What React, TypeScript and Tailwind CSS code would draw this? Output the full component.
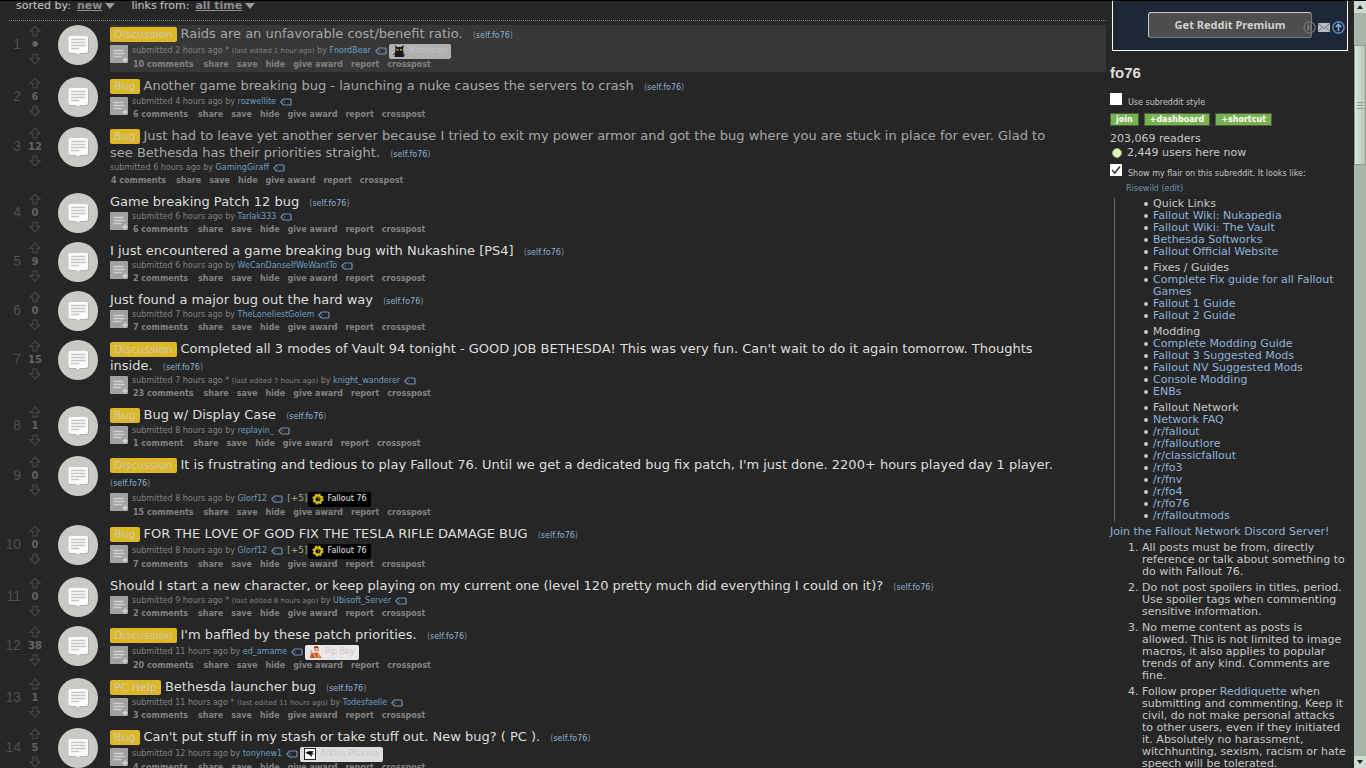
type Flair = { label: string; kind: 'mothman' | 'fallout' | 'pipboy' | 'arktos'; votes?: string };

type Post = {
  rank: number;
  score: string;
  tag?: string;
  title: string;
  age: string;
  edited?: string;
  author: string;
  comments: string;
  flair?: Flair;
  visited?: boolean;
  selected?: boolean;
  noExpando?: boolean;
};

const posts: Post[] = [
  { rank: 1, score: '•', tag: 'Discussion', title: 'Raids are an unfavorable cost/benefit ratio.', age: '2 hours', edited: '1 hour', author: 'FnordBear', comments: '10 comments', flair: { label: 'Mothman', kind: 'mothman' }, visited: true, selected: true },
  { rank: 2, score: '6', tag: 'Bug', title: 'Another game breaking bug - launching a nuke causes the servers to crash', age: '4 hours', author: 'rozwellite', comments: '6 comments', visited: true },
  { rank: 3, score: '12', tag: 'Bug', title: 'Just had to leave yet another server because I tried to exit my power armor and got the bug where you are stuck in place for ever. Glad to see Bethesda has their priorities straight.', age: '6 hours', author: 'GamingGiraff', comments: '4 comments', visited: true, noExpando: true },
  { rank: 4, score: '0', title: 'Game breaking Patch 12 bug', age: '6 hours', author: 'Tarlak333', comments: '6 comments' },
  { rank: 5, score: '9', title: 'I just encountered a game breaking bug with Nukashine [PS4]', age: '6 hours', author: 'WeCanDanseIfWeWantTo', comments: '2 comments' },
  { rank: 6, score: '0', title: 'Just found a major bug out the hard way', age: '7 hours', author: 'TheLoneliestGolem', comments: '7 comments' },
  { rank: 7, score: '15', tag: 'Discussion', title: "Completed all 3 modes of Vault 94 tonight - GOOD JOB BETHESDA! This was very fun. Can't wait to do it again tomorrow. Thoughts inside.", age: '7 hours', edited: '7 hours', author: 'knight_wanderer', comments: '23 comments' },
  { rank: 8, score: '1', tag: 'Bug', title: 'Bug w/ Display Case', age: '8 hours', author: 'replayin_', comments: '1 comment' },
  { rank: 9, score: '0', tag: 'Discussion', title: "It is frustrating and tedious to play Fallout 76. Until we get a dedicated bug fix patch, I'm just done. 2200+ hours played day 1 player.", age: '8 hours', author: 'Glorf12', comments: '15 comments', flair: { label: 'Fallout 76', kind: 'fallout', votes: '[+5]' } },
  { rank: 10, score: '0', tag: 'Bug', title: 'FOR THE LOVE OF GOD FIX THE TESLA RIFLE DAMAGE BUG', age: '8 hours', author: 'Glorf12', comments: '7 comments', flair: { label: 'Fallout 76', kind: 'fallout', votes: '[+5]' } },
  { rank: 11, score: '0', title: 'Should I start a new character, or keep playing on my current one (level 120 pretty much did everything I could on it)?', age: '9 hours', edited: '8 hours', author: 'Ubisoft_Server', comments: '2 comments' },
  { rank: 12, score: '38', tag: 'Discussion', title: "I'm baffled by these patch priorities.", age: '11 hours', author: 'ed_amame', comments: '20 comments', flair: { label: 'Pip Boy', kind: 'pipboy' } },
  { rank: 13, score: '1', tag: 'PC Help', title: 'Bethesda launcher bug', age: '11 hours', edited: '11 hours', author: 'Todesfaelle', comments: '3 comments' },
  { rank: 14, score: '5', tag: 'Bug', title: "Can't put stuff in my stash or take stuff out. New bug? ( PC ).", age: '12 hours', author: 'tonynew1', comments: '4 comments', flair: { label: 'Arktos Pharma', kind: 'arktos' } },
];

const actions = ['share', 'save', 'hide', 'give award', 'report', 'crosspost'];

const linkGroups = [
  { heading: 'Quick Links', links: ['Fallout Wiki: Nukapedia', 'Fallout Wiki: The Vault', 'Bethesda Softworks', 'Fallout Official Website'] },
  { heading: 'Fixes / Guides', links: ['Complete Fix guide for all Fallout Games', 'Fallout 1 Guide', 'Fallout 2 Guide'] },
  { heading: 'Modding', links: ['Complete Modding Guide', 'Fallout 3 Suggested Mods', 'Fallout NV Suggested Mods', 'Console Modding', 'ENBs'] },
  { heading: 'Fallout Network', links: ['Network FAQ', '/r/fallout', '/r/falloutlore', '/r/classicfallout', '/r/fo3', '/r/fnv', '/r/fo4', '/r/fo76', '/r/falloutmods'] },
];

const flairColors = {
  mothman: 'bg-[#b0b0b0] text-[#c4c4c4]',
  fallout: 'bg-black text-[#e6e6e6]',
  pipboy: 'bg-[#ebe7e6] text-[#c9c9c9]',
  arktos: 'bg-[#dedede] text-[#c6c6c6]',
};

function Arrow({ down = false }: { down?: boolean }) {
  return (
    <svg width="12" height="12" viewBox="0 0 12 12" className={down ? 'rotate-180' : ''} fill="none" stroke="#474747" strokeWidth="1.2">
      <path d="M6 1 L11 6.3 H8 V10.8 H4 V6.3 H1 Z" />
    </svg>
  );
}

function Thumbnail() {
  return (
    <svg width="40" height="40" viewBox="0 0 40 40">
      <circle cx="20" cy="20" r="20" fill="#c9cac4" />
      <path d="M12.500 12 h16.500 a2 2 0 0 1 2 2 v13 a2 2 0 0 1 -2 2 h-7 l-2 2 l-2 -2 h-5.500 a2 2 0 0 1 -2 -2 v-13 a2 2 0 0 1 2 -2" fill="#b2b3ad" />
      <path d="M12.500 11 h15.500 a2 2 0 0 1 2 2 v13 a2 2 0 0 1 -2 2 h-6 l-2 2 l-2 -2 h-5.500 a2 2 0 0 1 -2 -2 v-13 a2 2 0 0 1 2 -2" fill="#fcfcfc" />
      <path d="M13 14.500 h14.500 M13 17.500 h14.500 M13 20.500 h14.500 M13 23.500 h8" stroke="#c6c7c2" strokeWidth="1.300" />
    </svg>
  );
}

function Expando() {
  return (
    <svg width="18" height="18" viewBox="0 0 18 18">
      <rect width="18" height="18" rx="1" fill="#a2a2a2" />
      <path d="M3.500 5.500 h10 M3.500 8.500 h11 M3.500 11.500 h8" stroke="#d0d0d0" strokeWidth="1.400" />
      <path d="M15 12.500 v5 M12.500 15 h5" stroke="#d6d6d6" strokeWidth="1.600" />
    </svg>
  );
}

function TagIcon() {
  return (
    <svg width="12" height="8" viewBox="0 0 12 8" fill="none" stroke="#6f93b8" strokeWidth="1.200">
      <path d="M3.500 1 H10 Q11 1 11 2 V6 Q11 7 10 7 H3.500 L0.800 4 Z" />
      <path d="M4 4 h1" />
    </svg>
  );
}

function FlairIcon({ kind }: { kind: Flair['kind'] }) {
  if (kind === 'mothman') {
    return (
      <svg width="12" height="12" viewBox="0 0 12 12">
        <path d="M2 0 L4 2 H8 L11 0 L10 4 L11 12 H1.500 L2.500 4 Z" fill="#17191b" />
        <path d="M3.500 4 h2 v1.500 h-2 z M7 4 h2 v1.500 h-2 z" fill="#e8a512" />
        <path d="M0 10 L3 7 M10 8 L12 11" stroke="#3c3c3c" />
      </svg>
    );
  }
  if (kind === 'fallout') {
    return (
      <svg width="12" height="12" viewBox="0 0 12 12">
        <circle cx="6" cy="6" r="3.500" fill="none" stroke="#e8c80e" strokeWidth="2" />
        <circle cx="6" cy="6" r="4.800" fill="none" stroke="#e8c80e" strokeWidth="1.600" strokeDasharray="2 1.770" />
        <path d="M4.500 4.500 h3 L6 8" fill="none" stroke="#9a850b" />
      </svg>
    );
  }
  if (kind === 'pipboy') {
    return (
      <svg width="12" height="12" viewBox="0 0 12 12">
        <path d="M5 1 Q7 -1 9.500 1 V3 H5 Z" fill="#b5371f" />
        <rect x="5" y="2" width="5" height="5" rx="2" fill="#f2c6a0" />
        <path d="M1 5 L3 4 L4 8 L2 9 Z" fill="#e3a07a" />
        <path d="M2 8 L5 7 H9 L12 11 V12 H1 Z" fill="#c6502c" />
        <path d="M5 8 L7 12 M9 8 L10 12" stroke="#e8b62c" strokeWidth="1.300" />
        <path d="M6 4 h1 M8.500 4 h1" stroke="#5b2a1a" />
      </svg>
    );
  }
  return (
    <svg width="12" height="12" viewBox="0 0 12 12">
      <rect x="0.500" y="0.500" width="11" height="11" fill="#fff" stroke="#222" />
      <path d="M1.500 5 Q4 2 10 3.500 L8 5 L10.500 6.500 L7.500 6.500 L8 9 L5 6.500 Z" fill="#111" />
    </svg>
  );
}

function PostRow({ post }: { post: Post }) {
  const tall = post.tag && !post.noExpando && post.rank !== 7;
  return (
    <article className="mb-[5px] flex items-start">
      <span className="w-[21px] shrink-0 pt-[11px] text-right font-['Liberation_Sans',Arial,sans-serif] text-sm leading-4 text-[#505050]">{post.rank}</span>
      <div className="flex w-7 shrink-0 flex-col items-center">
        <button aria-label="upvote"><Arrow /></button>
        <span className={`leading-4 font-bold text-[#646464] ${post.score === '•' ? 'text-base' : 'text-[10px]'}`}>{post.score}</span>
        <button aria-label="downvote"><Arrow down /></button>
      </div>
      <a href="#" aria-label={post.title} className="-mb-1 ml-[9px] shrink-0"><Thumbnail /></a>
      <div className={`ml-3 min-w-0 flex-1 ${post.selected ? 'bg-[#373737]' : ''}`}>
        <p className={`pr-10 text-[13px] leading-[17px] ${tall ? 'pb-px' : ''}`}>
          {post.tag && (
            <span className="mr-1 inline-block h-[15px] rounded-xs bg-[#ddb726] px-1 align-bottom text-[11px] leading-[15px] text-[#cfcbbd]">{post.tag}</span>
          )}
          <a href="#" className={`mr-1.5 ${post.visited ? 'text-[#a6a6a6]' : 'text-[#dedede]'}`}>{post.title}</a>{' '}
          <span className="inline-block align-bottom text-[8px] leading-[12px] text-[#888888]">
            (<a href="#" className="text-[#8cb3d9]">self.fo76</a>)
          </span>
        </p>
        <div className="flex gap-1">
          {!post.noExpando && (
            <button aria-label="expand" className="mt-0.5 -mb-1 h-[18px] shrink-0"><Expando /></button>
          )}
          <div className="pt-px">
            <div className={`flex items-center text-[8px] whitespace-pre text-[#828282] ${post.flair ? 'h-3.5' : 'h-3'}`}>
              <span>submitted {post.age} ago </span>
              {post.edited && <span>* <span className="text-[7px]">(last edited {post.edited} ago)</span> </span>}
              <span>by </span>
              <a href="#" className="text-[#6a9fc0]">{post.author}</a>
              <button aria-label="tag user" className="ml-1"><TagIcon /></button>
              {post.flair?.votes && <span className="ml-1 text-[9px] text-[#9bb08a]">{post.flair.votes}</span>}
              {post.flair && (
                <span className={`flex h-[15px] items-center gap-1 rounded-xs px-1 ${flairColors[post.flair.kind]} ${post.flair.votes ? '' : 'ml-0.5'}`}>
                  <FlairIcon kind={post.flair.kind} />
                  {post.flair.label}
                </span>
              )}
            </div>
            <div className="flex gap-2 pl-px text-[8px] leading-[14px] font-bold text-[#828282]">
              <a href="#" className="pr-0.5">{post.comments}</a>
              {actions.map((a) => <button key={a}>{a}</button>)}
            </div>
          </div>
        </div>
      </div>
    </article>
  );
}

function SortMenu({ label, value }: { label: string; value: string }) {
  return (
    <div className="flex items-center">
      <span>{label}</span>
      <button aria-haspopup="menu" aria-label={`${label} ${value}`} className="ml-1.5 flex items-center gap-[3px] font-bold text-[#8c8c8c]">
        <span className="underline">{value}</span>
        <svg width="10" height="6" viewBox="0 0 10 6"><path d="M0 0 H10 L5 6 Z" fill="#999" /></svg>
      </button>
    </div>
  );
}

function PremiumBox() {
  return (
    <div className="relative mr-1.5 ml-0.5 h-[50px] border border-t-0 border-white bg-[#1c2836] px-[35px] pt-[11px]">
      <button className="h-[26px] w-full rounded-[3px] border border-[#777] border-t-[#c8c8c8] border-l-[#c8c8c8] bg-[#4d4d4d] font-['Noto_Sans',sans-serif] text-[11px] font-bold text-[#cfcfcf]">
        Get Reddit Premium
      </button>
      <div className="absolute top-5 right-0.5 flex items-center gap-0.5">
        <svg width="13" height="13" viewBox="0 0 14 14" fill="none" stroke="#777" strokeWidth="1.300">
          <circle cx="7" cy="7" r="6" />
          <path d="M5.500 4 v6 M8.500 4 v6" strokeWidth="2" />
        </svg>
        <svg width="12" height="9" viewBox="0 0 12 9">
          <rect width="12" height="9" fill="#b9bcc0" />
          <path d="M0 0.500 L6 5.500 L12 0.500 M0 8.500 L4 4.500 M12 8.500 L8 4.500" fill="none" stroke="#6d7278" />
        </svg>
        <svg width="13" height="13" viewBox="0 0 13 13" fill="none" stroke="#5583b8" strokeWidth="1.600">
          <circle cx="6.500" cy="6.500" r="5.600" />
          <path d="M6.500 10 V3.500 M3.800 6 L6.500 3.300 L9.200 6" stroke="#8bb2dc" />
        </svg>
      </div>
    </div>
  );
}

function FlairCheckbox({ id, label, checked = false }: { id: string; label: string; checked?: boolean }) {
  return (
    <div className="flex items-end gap-1.5 text-[8px] leading-[9px] text-[#c4c4c4]">
      <span className="relative h-3 w-3 shrink-0">
        <input id={id} type="checkbox" defaultChecked={checked} className="peer block h-3 w-3 appearance-none bg-white" />
        <svg width="12" height="12" viewBox="0 0 12 12" className="pointer-events-none absolute inset-0 hidden peer-checked:block">
          <path d="M2 6 L4.800 9 L10 2.500" fill="none" stroke="#333" strokeWidth="1.500" />
        </svg>
      </span>
      <label htmlFor={id} className="-mb-0.5">{label}</label>
    </div>
  );
}

function Sidebar() {
  return (
    <aside className="ml-1 w-[244px] shrink-0 text-[11px] leading-3 text-[#c8c8c8]">
      <PremiumBox />
      <h1 className="mt-3.5 mb-3 font-['Liberation_Sans',Arial,sans-serif] text-[15px] leading-4 font-bold text-[#dedede]">fo76</h1>
      <FlairCheckbox id="substyle" label="Use subreddit style" />
      <div className="mt-2 flex gap-[5px]">
        {['join', '+dashboard', '+shortcut'].map((b) => (
          <button key={b} className="h-[13px] border border-[#4c5c3c] bg-[#77b150] px-[5px] text-[8px] leading-[11px] font-bold text-white">{b}</button>
        ))}
      </div>
      <div className="mt-1.5 leading-[14px]">
        <p>203,069 readers</p>
        <p className="flex items-center gap-[5px]">
          <span className="ml-0.5 h-2.5 w-2.5 rounded-full border border-[#86b35c] bg-[#dcf5b8]" />
          2,449 users here now
        </p>
      </div>
      <div className="mt-1">
        <FlairCheckbox id="showflair" label="Show my flair on this subreddit. It looks like:" checked />
      </div>
      <p className="mt-[7px] pl-4 text-[8px] leading-3 text-[#6a93b0]">
        Risewild <a href="#">(edit)</a>
      </p>
      <div className="mt-[3px] ml-1 flex flex-col gap-1 border-l border-[#666] pl-[38px]">
        {linkGroups.map((group) => (
          <ul key={group.heading}>
            {[group.heading, ...group.links].map((text, i) => (
              <li key={text} className="relative pr-2">
                <span className="absolute top-1 -left-[9px] h-1 w-1 rounded-full bg-[#c8c8c8]" />
                {i === 0 ? text : <a href="#" className="text-[#8cb3d9]">{text}</a>}
              </li>
            ))}
          </ul>
        ))}
      </div>
      <p className="my-1"><a href="#" className="text-[#8cb3d9]">Join the Fallout Network Discord Server!</a></p>
      <ol className="flex list-decimal flex-col gap-1 pr-1.5 pl-8">
        <li>All posts must be from, directly reference or talk about something to do with Fallout 76.</li>
        <li>Do not post spoilers in titles, period. Use spoiler tags when commenting sensitive information.</li>
        <li>No meme content as posts is allowed. This is not limited to image macros, it also applies to popular trends of any kind. Comments are<br />fine.</li>
        <li>
          Follow proper <a href="#" className="text-[#8cb3d9]">Reddiquette</a> when submitting and commenting. Keep it civil, do not make personal attacks<br />
          to other users, even if they initiated it. Absolutely no harassment, witchhunting, sexism, racism or hate speech will be tolerated.
        </li>
      </ol>
    </aside>
  );
}

function Scrollbar() {
  return (
    <div className="flex w-3 shrink-0 flex-col bg-[#a6b7aa]">
      <div className="flex h-3 items-center justify-center bg-[#cddccf]">
        <svg width="6" height="4" viewBox="0 0 6 4"><path d="M0 4 H6 L3 0 Z" fill="#222" /></svg>
      </div>
      <div className="mt-8 flex h-[120px] flex-col items-center justify-center gap-0.5 border border-[#8b9c8f] bg-linear-to-r from-[#dbe9dd] to-[#b5c7b8]">
        {[0, 1, 2].map((n) => (
          <span key={n} className="h-px w-1.5 bg-[#8b9c8f]" />
        ))}
      </div>
      <div className="mt-auto flex h-3 items-center justify-center bg-[#cddccf]">
        <svg width="6" height="4" viewBox="0 0 6 4"><path d="M0 0 H6 L3 4 Z" fill="#222" /></svg>
      </div>
    </div>
  );
}

export default function App() {
  return (
    <div className="flex h-screen overflow-hidden border-t border-black bg-[#262626] font-['DejaVu_Sans',Verdana,sans-serif]">
      <main className="min-w-0 flex-1">
        <header className="mb-1 ml-[9px] flex h-5 items-start gap-4 border-b border-dotted border-[#8a8a8a] pl-[7px] text-[11px] leading-[10px] text-[#c8c8c8]">
          <SortMenu label="sorted by:" value="new" />
          <SortMenu label="links from:" value="all time" />
        </header>
        {posts.map((post) => <PostRow key={post.rank} post={post} />)}
      </main>
      <Sidebar />
      <Scrollbar />
    </div>
  );
}
